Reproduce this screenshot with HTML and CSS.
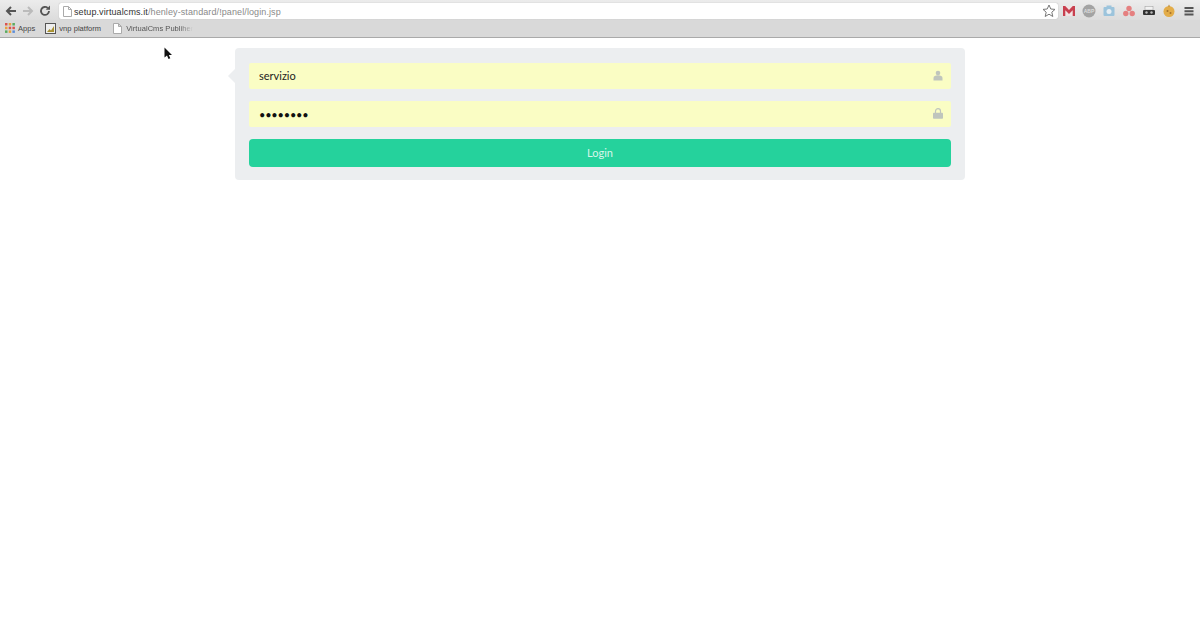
FILE: index.html
```html
<!DOCTYPE html>
<html>
<head>
	<meta charset="utf-8">
	<title>login</title>
	<link rel="stylesheet" href="styles.css">
</head>
<body>
	<div class="toolbar">
		<svg class="nav" width="12" height="12" viewBox="0 0 12 12"><path d="M11 6H3M6 2L2 6l4 4" fill="none" stroke="#555" stroke-width="2"/></svg>
		<svg class="nav" width="12" height="12" viewBox="0 0 12 12"><path d="M1 6h8M6 2l4 4-4 4" fill="none" stroke="#bbb" stroke-width="2"/></svg>
		<svg class="nav" width="12" height="12" viewBox="0 0 12 12"><path d="M10 6a4 4 0 1 1-1.300-3" fill="none" stroke="#555" stroke-width="1.800"/><path d="M11 .5v4.200H6.800z" fill="#555"/></svg>
		<div class="urlbar">
			<svg class="page-icon" width="9" height="11" viewBox="0 0 9 11"><path d="M.5.5h5l3 3v7h-8zM5.500.5v3h3" fill="#fff" stroke="#aaa"/></svg>
			<span class="url"><span class="host">setup.virtualcms.it</span>/henley-standard/!panel/login.jsp</span>
			<svg class="star" width="14" height="14" viewBox="0 0 14 14"><path d="M7 1l1.800 4 4.200.4-3.200 2.800 1 4.300L7 10.200 3.200 12.500l1-4.300L1 5.400 5.200 5z" fill="#fff" stroke="#777"/></svg>
		</div>
		<div class="ext-icons">
			<svg width="14" height="14" viewBox="0 0 14 14"><rect x="1" y="2" width="12" height="10" fill="#f2e4e4"/><path d="M1 2h2.200L7 6l3.800-4H13v10h-2.300V6.200L7 10 3.300 6.200V12H1z" fill="#c8404f"/></svg>
			<svg width="14" height="14" viewBox="0 0 14 14"><circle cx="7" cy="7" r="6.500" fill="#a3a3a3"/><text class="abp" x="7" y="9">ABP</text></svg>
			<svg width="14" height="14" viewBox="0 0 14 14"><rect x="1.500" y="3" width="11" height="9" rx="1" fill="#9cc4dc"/><rect x="4.500" y="1.500" width="5" height="2" fill="#9cc4dc"/><circle cx="7" cy="7.500" r="2.500" fill="#e6eef3"/></svg>
			<svg width="14" height="14" viewBox="0 0 14 14"><circle cx="7" cy="4.500" r="2.700" fill="#e58080"/><circle cx="3.800" cy="9.500" r="2.700" fill="#e58080"/><circle cx="10.200" cy="9.500" r="2.700" fill="#e58080"/></svg>
			<svg width="14" height="14" viewBox="0 0 14 14"><rect x="3" y="2.500" width="8" height="3.500" fill="#f2f2f2" stroke="#999" stroke-width=".5"/><rect x="1" y="6" width="12" height="5" rx="1" fill="#333"/><circle cx="4.500" cy="8.500" r="1.200" fill="#bbb"/><circle cx="9.500" cy="8.500" r="1.200" fill="#bbb"/></svg>
			<svg width="14" height="14" viewBox="0 0 14 14"><circle cx="7" cy="7.500" r="5.500" fill="#e3ad4a"/><path d="M6 2.500l1-2 1 2z" fill="#b98428"/><circle cx="5.500" cy="7" r="1" fill="#a5722a"/><circle cx="8.500" cy="9" r="1" fill="#a5722a"/></svg>
			<svg width="14" height="14" viewBox="0 0 14 14"><path d="M2.500 3h9v2h-9zM2.500 6.200h9v2h-9zM2.500 9.400h9v2h-9z" fill="#555"/></svg>
		</div>
	</div>

	<div class="bookmarks">
		<span class="bookmark">
			<svg width="10" height="10" viewBox="0 0 10 10"><path d="M0 0h2.500v2.500H0z" fill="#d9534f"/><path d="M3.700 0h2.500v2.500H3.700z" fill="#e8a33d"/><path d="M7.400 0h2.500v2.500H7.400z" fill="#5bab5f"/><path d="M0 3.700h2.500v2.500H0z" fill="#e8a33d"/><path d="M3.700 3.700h2.500v2.500H3.700z" fill="#d9534f"/><path d="M7.400 3.700h2.500v2.500H7.400z" fill="#d9534f"/><path d="M0 7.400h2.500v2.500H0z" fill="#5bab5f"/><path d="M3.700 7.400h2.500v2.500H3.700z" fill="#e8a33d"/><path d="M7.400 7.400h2.500v2.500H7.400z" fill="#5b8dd9"/></svg>
			Apps
		</span>
		<span class="bookmark">
			<svg width="11" height="11" viewBox="0 0 11 11"><rect x=".5" y=".5" width="10" height="10" fill="#eee" stroke="#555"/><path d="M2 9l2.500-3 1.500 1.500L9 3v6z" fill="#a8912f"/></svg>
			vnp platform
		</span>
		<span class="bookmark bookmark-last">
			<svg width="9" height="11" viewBox="0 0 9 11"><path d="M.5.5h5l3 3v7h-8zM5.500.5v3h3" fill="#fff" stroke="#aaa"/></svg>
			<span class="fade">VirtualCms Publiher</span>
		</span>
	</div>

	<svg class="cursor" width="9" height="13" viewBox="0 0 9 13"><path d="M.5.5v10l2.500-2 1.500 3.500 1.800-.8L4.800 8H8z" fill="#111"/></svg>

	<form class="login-box">
		<div class="field">
			<input class="field-input" type="text" value="servizio">
			<svg class="field-icon" width="10" height="11" viewBox="0 0 10 11"><circle cx="5" cy="3" r="2.300" fill="#bfc5bd"/><path d="M.5 10.500V8c0-1.800 1.800-2.700 4.500-2.700S9.500 6.200 9.500 8v2.500z" fill="#bfc5bd"/></svg>
		</div>
		<div class="field">
			<input class="field-input field-pass" type="password" value="12345678">
			<svg class="field-icon" width="10" height="11" viewBox="0 0 10 11"><path d="M2.500 5V3.200a2.500 2.500 0 0 1 5 0V5" fill="none" stroke="#bfc5bd" stroke-width="1.200"/><rect y="4.800" width="10" height="6" rx=".8" fill="#bfc5bd"/></svg>
		</div>
		<button class="login-btn" type="button">Login</button>
	</form>
</body>
</html>
```

FILE: styles.css
```css
body
{
	margin: 0;
	background: #fff;
	font-family: "Liberation Sans", Arial, sans-serif;
}
.toolbar
{
	display: flex;
	align-items: center;
	height: 20px;
	padding: 2px 0 0 5px;
	box-sizing: border-box;
	background: linear-gradient(#ececec, #dcdcdc);
}
.nav
{
	margin-right: 5px;
	flex: none;
}
.urlbar
{
	display: flex;
	align-items: center;
	width: 999px;
	height: 16px;
	margin-left: 3px;
	padding: 0 4px;
	box-sizing: border-box;
	background: #fff;
	border-radius: 2px;
	box-shadow: 0 0 1px #999;
}
.page-icon
{
	margin-right: 2px;
}
.url
{
	flex: 1;
	padding-top: 1px;
	font-size: 9px;
	color: #8a8a8a;
	letter-spacing: 0.1px;
}
.host
{
	color: #333;
}
.star
{
	margin-right: -2px;
}
.ext-icons
{
	display: flex;
	gap: 6px;
	margin-left: 4px;
}
.abp
{
	font-size: 5px;
	font-weight: bold;
	text-anchor: middle;
	fill: #dcdcdc;
}
.bookmarks
{
	display: flex;
	align-items: center;
	gap: 10px;
	height: 18px;
	padding: 0 0 1px 5px;
	box-sizing: border-box;
	background: #d9d9d9;
	border-bottom: 1px solid #aaa;
	font-size: 7.5px;
	letter-spacing: 0.05px;
	color: #444;
}
.bookmark
{
	display: flex;
	align-items: center;
	gap: 3px;
}
.bookmark-last
{
	margin-left: 2px;
	gap: 4px;
}
.fade
{
	color: #555;
	-webkit-mask-image: linear-gradient(to right, #000 80%, transparent);
	mask-image: linear-gradient(to right, #000 80%, transparent);
}
.cursor
{
	position: absolute;
	left: 164px;
	top: 47px;
}
.login-box
{
	position: relative;
	display: flex;
	flex-direction: column;
	gap: 12px;
	width: 730px;
	margin: 10px auto 0;
	padding: 15px 14px 13px;
	box-sizing: border-box;
	background: #eceef0;
	border-radius: 4px;
}
.login-box:before
{
	content: "";
	position: absolute;
	left: -7px;
	top: 21px;
	border-top: 7px solid transparent;
	border-bottom: 7px solid transparent;
	border-right: 7px solid #eceef0;
}
.field
{
	position: relative;
	height: 26px;
}
.field-input
{
	display: block;
	width: 100%;
	height: 26px;
	padding: 0 10px 2px;
	box-sizing: border-box;
	border: 0;
	border-radius: 2px;
	background: #fafdc4;
	font-family: Lato, sans-serif;
	font-size: 11px;
	color: #222;
}
.field-pass
{
	padding-bottom: 0;
	letter-spacing: -0.2px;
	color: #111;
}
.field-icon
{
	position: absolute;
	right: 8px;
	top: 7px;
}
.login-btn
{
	height: 28px;
	padding-bottom: 3px;
	border: 0;
	border-radius: 4px;
	background: #25d29c;
	color: #d8f5ea;
	font-family: Lato, sans-serif;
	font-size: 11px;
}
```
